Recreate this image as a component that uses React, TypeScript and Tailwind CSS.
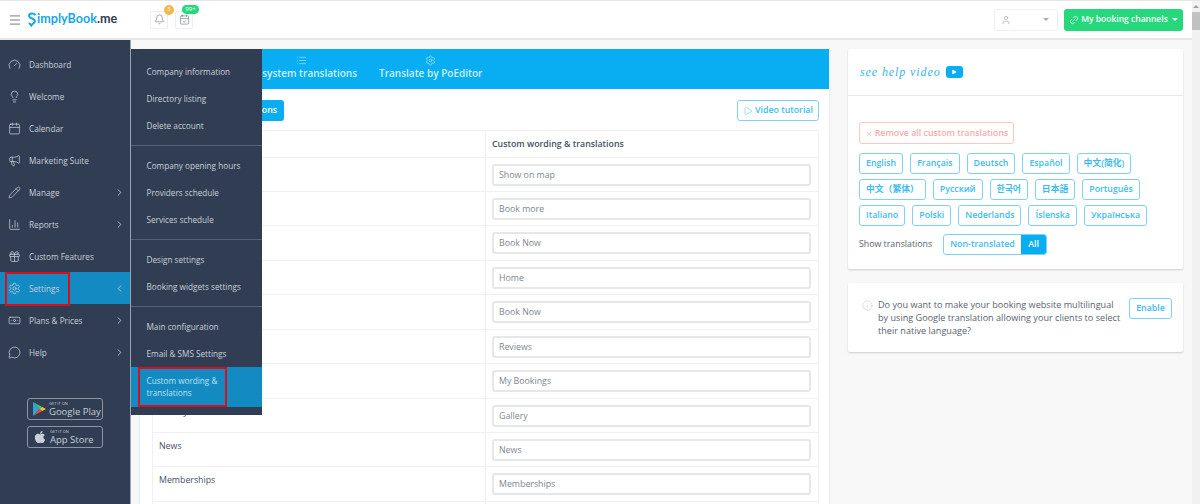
import { Bell, CalendarCheck, Calendar, ChartColumn, ChevronLeft, ChevronRight, Gauge, Gift, Settings, Banknote, Info, Lightbulb, Link2, List, Megaphone, MessageCircle, Menu, Pencil, Play, User, X } from "lucide-react"
import { FaApple } from "react-icons/fa"

const sideItems = [
  { label: "Dashboard", icon: Gauge },
  { label: "Welcome", icon: Lightbulb },
  { label: "Calendar", icon: Calendar },
  { label: "Marketing Suite", icon: Megaphone },
  { label: "Manage", icon: Pencil, arrow: true },
  { label: "Reports", icon: ChartColumn, arrow: true },
  { label: "Custom Features", icon: Gift },
  { label: "Settings", icon: Settings, active: true },
  { label: "Plans & Prices", icon: Banknote, arrow: true },
  { label: "Help", icon: MessageCircle, arrow: true },
]

const subGroups = [
  ["Company information", "Directory listing", "Delete account"],
  ["Company opening hours", "Providers schedule", "Services schedule"],
  ["Design settings", "Booking widgets settings"],
]

const rows = [
  ["", "Show on map"],
  ["", "Book more"],
  ["", "Book Now"],
  ["", "Home"],
  ["", "Book Now"],
  ["", "Reviews"],
  ["", "My Bookings"],
  ["Gallery", "Gallery"],
  ["News", "News"],
  ["Memberships", "Memberships"],
  ["", ""],
]

const languages = [
  ["English", "Français", "Deutsch", "Español", "中文(简化)"],
  ["中文（繁体）", "Русский", "한국어", "日本語", "Português"],
  ["Italiano", "Polski", "Nederlands", "Íslenska", "Українська"],
]

function Sidebar() {
  return (
    <aside className="w-[131px] shrink-0 border-r border-[#9aa3b0] bg-[#303d53] pt-2 text-[8.2px]">
      {sideItems.map((item) => (
        <div
          key={item.label}
          className={`relative flex h-8 items-center pl-[8px] pr-[5px] text-[#c9d0d9] ${item.active ? "bg-[#138ac1]" : ""}`}
        >
          <item.icon size={13} strokeWidth={1.4} className="shrink-0" />
          <span className="ml-[8px] flex-1 whitespace-nowrap pt-[2px]">{item.label}</span>
          {item.arrow && <ChevronRight size={11} strokeWidth={1.8} />}
          {item.active && <ChevronLeft size={11} strokeWidth={1.8} />}
          {item.active && <div className="absolute left-[5px] top-0 h-[34px] w-[65px] border-2 border-[#d9101c]" />}
        </div>
      ))}
      <div className="mt-[30px] flex flex-col items-center gap-[6px]">
        <div className="flex h-[22px] w-[76px] items-center gap-[3px] rounded-[3px] border border-[#8d95a3] pl-[5px]">
          <svg width="13" height="14" viewBox="0 0 14 15" className="shrink-0">
            <path d="M0 0 L7 7.5 L0 15 Z" fill="#2aa6e0" />
            <path d="M0 0 L10 5.4 L7 7.5 Z" fill="#4fc06b" />
            <path d="M0 15 L10 9.6 L7 7.5 Z" fill="#e8493f" />
            <path d="M10 5.4 L14 7.5 L10 9.6 L7 7.5 Z" fill="#f5bf2a" />
          </svg>
          <div className="flex flex-col whitespace-nowrap text-[#c9d0d9]">
            <span className="text-[4px] leading-[5px]">GET IT ON</span>
            <span className="text-[9.5px] leading-[11px]">Google Play</span>
          </div>
        </div>
        <div className="flex h-[22px] w-[76px] items-center gap-[3px] rounded-[3px] border border-[#8d95a3] pl-[5px]">
          <FaApple size={14} className="shrink-0 text-[#c9d0d9]" />
          <div className="flex flex-col whitespace-nowrap text-[#c9d0d9]">
            <span className="text-[4px] leading-[5px]">GET IT ON</span>
            <span className="text-[9.5px] leading-[11px]">App Store</span>
          </div>
        </div>
      </div>
    </aside>
  )
}

function SubMenu() {
  return (
    <div className="absolute left-[131px] top-[9px] z-10 h-[366px] w-[131px] bg-[#303d53] pt-[9px] text-[8.2px] text-[#c9d0d9]">
      {subGroups.map((group) => (
        <div key={group[0]} className="mb-[6px] border-b border-[#56627a] pb-[6px]">
          {group.map((name) => (
            <div key={name} className="flex h-[27px] items-center whitespace-nowrap pl-[15.5px] pt-px">{name}</div>
          ))}
        </div>
      ))}
      <div className="flex h-[27px] items-center pl-[15.5px] pt-px">Main configuration</div>
      <div className="flex h-[27px] items-center pl-[15.5px] pt-px">Email &amp; SMS Settings</div>
      <div className="relative flex h-10 items-center bg-[#138ac1] pl-[15.5px] leading-3 text-[#bfe3f4]">
        <span>Custom wording &amp;<br />translations</span>
        <div className="absolute left-[7px] top-0 h-10 w-[89px] border-2 border-[#d9101c]" />
      </div>
    </div>
  )
}

function Header() {
  return (
    <header className="flex h-[39px] shrink-0 items-center border-b-2 border-[#e6e6e6] bg-white pr-[9px]">
      <Menu size={14} strokeWidth={1.3} className="ml-[8px] shrink-0 text-[#4a5462]" />
      <div className="ml-[5px] flex w-[90px] shrink-0 items-center text-[12.6px] font-bold text-[#18a7e6]" style={{ fontFamily: "Lato, sans-serif" }}>
        <svg width="10" height="15" viewBox="0 0 9 15" className="shrink-0">
          <path d="M8 3 C6 0.8 1.6 1 1.6 4 C1.6 7 7.4 6 7.4 9 C7.4 11 5 11.5 3.8 13.5 L1.5 10.8" fill="none" stroke="#18a7e6" strokeWidth="2" />
        </svg>
        <span>implyBook</span>
        <span className="text-[#303d53]">.me</span>
      </div>
      <div className="relative ml-[33px] flex size-[18px] items-center justify-center rounded-[2px] border border-[#eeeeee]">
        <Bell size={11} strokeWidth={1.3} className="text-[#6b7480]" />
        <span className="absolute -right-[7px] -top-[7px] flex size-[10px] items-center justify-center rounded-full bg-[#f7b64a] text-[6px] text-white">5</span>
      </div>
      <div className="relative ml-[7px] flex size-[18px] items-center justify-center rounded-[2px] border border-[#eeeeee]">
        <CalendarCheck size={11} strokeWidth={1.3} className="text-[#6b7480]" />
        <span className="absolute -right-[7px] -top-[7px] flex h-[9px] w-[17px] items-center justify-center rounded-full bg-[#26d87c] text-[6px] text-white">99+</span>
      </div>
      <div className="ml-auto flex h-[22px] w-[64px] items-center justify-between rounded-[3px] border border-[#f0f0f0] pl-[6px] pr-[8px] text-[#9aa0a8]">
        <User size={10} strokeWidth={1.5} />
        <span className="border-x-[3px] border-t-[3px] border-x-transparent border-t-[#a8adb5]" />
      </div>
      <button className="ml-[6px] flex h-[22px] w-[119px] items-center justify-center gap-[2px] whitespace-nowrap rounded-[3px] bg-[#26d87c] text-[8.5px] font-semibold text-white">
        <Link2 size={10} strokeWidth={1.6} className="-rotate-45" />
        My booking channels
        <span className="ml-[2px] border-x-[3px] border-t-[3px] border-x-transparent border-t-white" />
      </button>
    </header>
  )
}

function TranslationPanel() {
  return (
    <section className="ml-[9px] w-[689px] shrink-0 bg-white shadow-sm">
      <div className="flex h-10 gap-[22px] bg-[#08aef1] pl-[105px] pt-[6px] text-[10px] font-semibold text-[#cfeefb]">
        <div className="flex flex-col items-center">
          <List size={11} strokeWidth={1.2} />
          <span className="whitespace-nowrap leading-[14px]">My system translations</span>
        </div>
        <div className="flex flex-col items-center">
          <Settings size={11} strokeWidth={1.2} />
          <span className="whitespace-nowrap leading-[14px]">Translate by PoEditor</span>
        </div>
      </div>
      <div className="flex h-[41px] items-center justify-between pl-3 pr-[10px] pt-px">
        <button className="h-[21px] w-[132px] rounded-[3px] bg-[#08aef1] pr-[7px] pt-px text-right font-semibold text-white">Translations</button>
        <button className="flex h-[21px] w-[82px] items-center justify-center gap-[2px] rounded-[3px] border border-[#7dd3f7] pt-px font-semibold text-[#3cbcf2]">
          <Play size={10} strokeWidth={1.2} />
          Video tutorial
        </button>
      </div>
      <div className="ml-3 mr-[10px] border-x border-t border-[#f0f0f0]">
        <div className="grid h-[26.5px] grid-cols-[333px_1fr] border-b border-[#f0f0f0]">
          <div className="border-r border-[#f0f0f0]" />
          <div className="flex items-center pl-[6px] pt-px font-semibold text-[#47505e]">Custom wording &amp; translations</div>
        </div>
        {rows.map(([label, value], i) => (
          <div key={i} className="grid h-[34.45px] grid-cols-[333px_1fr] border-b border-[#f0f0f0]">
            <div className="border-r border-[#f0f0f0] pl-[6px] pt-[6px] leading-[14px] text-[#47505e]">{label}</div>
            <div className="pl-[6px] pr-[7px] pt-[6px]">
              <input readOnly placeholder={value} className="h-[22px] w-full rounded-[3px] border-2 border-[#e6e7eb] px-[5px] placeholder:text-[#80868f]" />
            </div>
          </div>
        ))}
      </div>
    </section>
  )
}

function SideCards() {
  return (
    <div className="ml-[19px] flex w-[335px] shrink-0 flex-col gap-[14px]">
      <section className="h-[220px] rounded-[2px] bg-white shadow-[0_1px_2px_rgba(0,0,0,0.18)]">
        <div className="flex h-[47px] items-center border-b border-[#e8e8e8] pl-3">
          <span className="text-[12px] italic tracking-[0.9px] text-[#34b4ee]" style={{ fontFamily: '"Liberation Serif", serif' }}>see help video</span>
          <span className="ml-[5px] flex h-3 w-[17px] items-center justify-center rounded-[3px] bg-[#08aef1]">
            <Play size={6} fill="white" strokeWidth={0} />
          </span>
        </div>
        <div className="px-[11px] pt-[26px]">
          <button className="flex h-[22px] w-[155px] items-center justify-center whitespace-nowrap rounded-[3px] border border-[#ffc4c4] pt-px font-semibold text-[#ffa9a9]">
            <X size={8} strokeWidth={1.8} className="mr-[2px]" />
            Remove all custom translations
          </button>
          <div className="mt-[9px] flex flex-col gap-[5px]">
            {languages.map((line) => (
              <div key={line[0]} className="flex gap-[7px]">
                {line.map((lang) => (
                  <button key={lang} className="flex h-[21px] items-center whitespace-nowrap rounded-[3px] border border-[#7dd3f7] px-[6px] font-semibold text-[#3cbcf2]">{lang}</button>
                ))}
              </div>
            ))}
          </div>
          <div className="mt-[8px] flex items-center">
            <span className="w-[84px] text-[#5a626e]">Show translations</span>
            <div className="flex h-[21px] rounded-[3px] border border-[#7dd3f7] font-semibold">
              <span className="flex w-[77px] items-center justify-center text-[#3cbcf2]">Non-translated</span>
              <span className="flex w-[25px] items-center justify-center rounded-r-[2px] bg-[#08aef1] text-white">All</span>
            </div>
          </div>
        </div>
      </section>
      <section className="flex h-[69px] rounded-[2px] bg-white pl-[14px] pr-[11px] pt-[15px] shadow-[0_1px_2px_rgba(0,0,0,0.18)]">
        <Info size={11} strokeWidth={1.2} className="mt-[2px] shrink-0 text-[#c5c7cb]" />
        <p className="ml-[5px] w-[244px] text-[9.1px] leading-[13.2px] text-[#5a626e]">Do you want to make your booking website multilingual by using Google translation allowing your clients to select their native language?</p>
        <button className="ml-auto h-[21px] w-[43px] rounded-[3px] border border-[#7dd3f7] font-semibold text-[#3cbcf2]">Enable</button>
      </section>
    </div>
  )
}

export default function App() {
  return (
    <div
      className="flex h-[504px] w-[1200px] overflow-hidden border-t border-[#e6e6e6] bg-[#f8f8f8] text-[8.8px]"
      style={{ fontFamily: '"Open Sans", "Noto Sans CJK SC", sans-serif' }}
    >
      <div className="flex min-w-0 flex-1 flex-col">
        <Header />
        <div className="relative flex min-h-0 flex-1">
          <Sidebar />
          <SubMenu />
          <main className="flex min-w-0 flex-1 items-start overflow-hidden pt-[9px]">
            <TranslationPanel />
            <SideCards />
          </main>
        </div>
      </div>
      <div className="flex w-2 shrink-0 flex-col items-center bg-[#f1f1f1] pt-[4px]">
        <span className="border-x-[3px] border-b-[3px] border-x-transparent border-b-[#a0a0a0]" />
        <div className="mt-[4px] h-[18px] w-full bg-[#c1c1c1]" />
      </div>
    </div>
  )
}
